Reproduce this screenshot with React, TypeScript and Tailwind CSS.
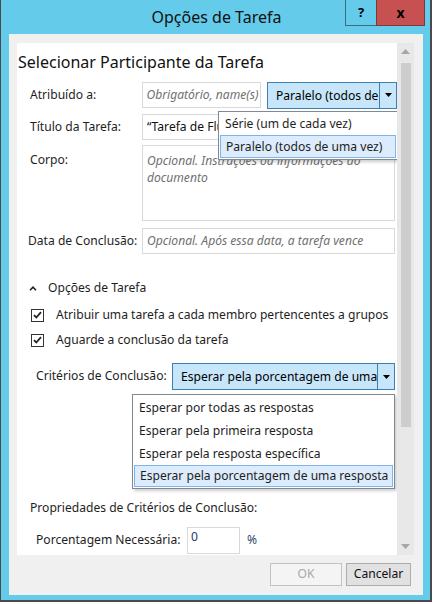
import React from 'react';

const font = { fontFamily: '"Noto Sans", "Open Sans", sans-serif' };

const Caret = () => (
    <svg width="7" height="4" viewBox="0 0 7 4"><path d="M0 0h7L3.5 4z" fill="#000" /></svg>
);

const Combo = ({ text, width }: { text: string; width: string }) => (
    <div className={`flex h-[27px] ${width} border border-[#3c7fb1] bg-[#c7e6fa]`}>
        <div className="flex-1 overflow-hidden whitespace-nowrap pl-[8px] leading-[25px] text-[#000]">{text}</div>
        <div className="flex w-[17px] items-center justify-center border-l border-[#3c7fb1]">
            <Caret />
        </div>
    </div>
);

const Check = () => (
    <div className="flex h-[13px] w-[13px] items-center justify-center border border-[#333] bg-white">
        <svg width="9" height="8" viewBox="0 0 9 8">
            <path d="M1 4.2l2.3 2.3L8 1.2" fill="none" stroke="#222" strokeWidth="1.8" />
        </svg>
    </div>
);

export default function App() {
    return (
        <div className="h-[604px] w-[435px] bg-white text-[12.1px] text-[#1e1e1e]" style={font}>
            <div className="relative flex h-[602px] w-[432px] flex-col border-b-2 border-l border-r-2 border-[#4a4a4a] bg-[#64cbea]">
                {/* Title bar */}
                <div className="flex h-[34px] items-center justify-center pl-[2px] text-[16px] text-[#111]">
                    Opções de Tarefa
                </div>
                <div className="absolute right-[5px] top-0 flex h-[26px]">
                    <div className="flex w-[31px] items-center justify-center border-b border-l border-[#3a6d80] text-[13px] font-bold text-black">?</div>
                    <div className="flex w-[49px] items-center justify-center border-b border-l border-r border-[#7a3a3a] bg-[#c75050] text-[14px] font-bold text-black">x</div>
                </div>

                {/* Client area */}
                <div className="ml-[8px] mr-[7px] flex h-[561px] flex-col bg-[#f0f0f0] pt-[9px]">
                    <div className="ml-[8px] mr-[9px] flex h-[512px]">
                        {/* White panel */}
                        <div className="relative flex w-[380px] flex-col overflow-hidden bg-white">
                            <div className="ml-[1px] mt-[8px] h-[22px] text-[16px] leading-[22px] text-[#111]">Selecionar Participante da Tarefa</div>

                            <div className="mt-[8px] flex h-[28px] items-center">
                                <div className="ml-[13px] w-[112px]">Atribuído a:</div>
                                <div className="h-[26px] w-[120px] overflow-hidden whitespace-nowrap border border-[#d9d9d9] pl-[4px] leading-[24px] italic text-[#707070]">Obrigatório, name(s)</div>
                                <div className="ml-[6px]"><Combo text="Paralelo (todos de uma vez)" width="w-[130px]" /></div>
                            </div>

                            <div className="mt-[5px] flex h-[26px] items-center">
                                <div className="ml-[13px] w-[112px]">Título da Tarefa:</div>
                                <div className="h-[26px] w-[253px] overflow-hidden whitespace-nowrap border border-[#d9d9d9] pl-[4px] leading-[24px] text-[#111]">“Tarefa de Fluxo de Trabalho”</div>
                            </div>

                            <div className="mt-[5px] flex h-[76px]">
                                <div className="ml-[13px] w-[112px] pt-[6px]">Corpo:</div>
                                <div className="h-[76px] w-[253px] border border-[#d9d9d9] px-[4px] pt-[6px] leading-[17px] italic text-[#707070]">Opcional. Instruções ou informações do documento</div>
                            </div>

                            <div className="mt-[7px] flex h-[26px] items-center">
                                <div className="ml-[11px] w-[114px] whitespace-nowrap">Data de Conclusão:</div>
                                <div className="h-[26px] w-[253px] overflow-hidden whitespace-nowrap border border-[#d9d9d9] pl-[4px] leading-[24px] italic text-[#707070]">Opcional. Após essa data, a tarefa vence</div>
                            </div>

                            <div className="mt-[24px] flex h-[20px] items-center">
                                <svg className="ml-[12px]" width="8" height="5" viewBox="0 0 8 5">
                                    <path d="M1 4.2L4 1.2l3 3" fill="none" stroke="#222" strokeWidth="1.6" />
                                </svg>
                                <div className="ml-[11px]">Opções de Tarefa</div>
                            </div>

                            <div className="mt-[7px] flex h-[20px] items-center">
                                <div className="ml-[14px]"><Check /></div>
                                <div className="ml-[12px] whitespace-nowrap">Atribuir uma tarefa a cada membro pertencentes a grupos</div>
                            </div>
                            <div className="mt-[5px] flex h-[20px] items-center">
                                <div className="ml-[14px]"><Check /></div>
                                <div className="ml-[12px]">Aguarde a conclusão da tarefa</div>
                            </div>

                            <div className="mt-[13px] flex h-[27px] items-center">
                                <div className="ml-[19px] w-[136px]">Critérios de Conclusão:</div>
                                <Combo text="Esperar pela porcentagem de uma resposta" width="w-[223px]" />
                            </div>

                            <div className="mt-[108px] flex h-[20px] items-center">
                                <div className="ml-[13px]">Propriedades de Critérios de Conclusão:</div>
                            </div>

                            <div className="mt-[9px] flex h-[27px] items-center">
                                <div className="ml-[19px] w-[151px]">Porcentagem Necessária:</div>
                                <div className="h-[27px] w-[53px] border border-[#d9d9d9] pl-[3px] pt-[1px] leading-[16px] text-[#1a3a6a]">0</div>
                                <div className="ml-[7px] text-[#2a4a6e]">%</div>
                            </div>

                            {/* Open list: Atribuído */}
                            <div className="absolute left-[201px] top-[68px] flex w-[180px] flex-col border border-[#828790] bg-white py-[1px] shadow-[2px_2px_3px_rgba(0,0,0,0.2)]">
                                <div className="h-[22px] pl-[6px] leading-[22px]">Série (um de cada vez)</div>
                                <div className="mx-[1px] h-[23px] border border-[#7eb4ea] bg-[#dcecfc] pl-[5px] leading-[21px]">Paralelo (todos de uma vez)</div>
                            </div>

                            {/* Open list: Critérios */}
                            <div className="absolute left-[115px] top-[351px] flex w-[263px] flex-col border border-[#828790] bg-white py-[1px] shadow-[2px_2px_3px_rgba(0,0,0,0.2)]">
                                <div className="h-[23px] pl-[6px] leading-[23px]">Esperar por todas as respostas</div>
                                <div className="h-[23px] pl-[6px] leading-[23px]">Esperar pela primeira resposta</div>
                                <div className="h-[23px] pl-[6px] leading-[23px]">Esperar pela resposta específica</div>
                                <div className="mx-[1px] h-[22px] border border-[#7eb4ea] bg-[#dcecfc] pl-[5px] leading-[20px]">Esperar pela porcentagem de uma resposta</div>
                            </div>
                        </div>

                        {/* Scrollbar */}
                        <div className="flex w-[17px] flex-col items-center bg-[#e8e8e8]">
                            <div className="flex h-[17px] items-center justify-center">
                                <svg width="9" height="5" viewBox="0 0 9 5"><path d="M0 5L4.5 0 9 5z" fill="#a6a6a6" /></svg>
                            </div>
                            <div className="mt-[3px] h-[364px] w-[10px] bg-[#cdcdcd]" />
                            <div className="flex-1" />
                            <div className="flex h-[17px] items-center justify-center">
                                <svg width="9" height="5" viewBox="0 0 9 5"><path d="M0 0h9L4.5 5z" fill="#a6a6a6" /></svg>
                            </div>
                        </div>
                    </div>

                    {/* Buttons */}
                    <div className="mr-[12px] mt-[8px] flex justify-end gap-[4px]">
                        <div className="flex h-[23px] w-[72px] items-center justify-center border border-[#c2c2c2] bg-[#f4f4f4] text-[#a8a8a8]">OK</div>
                        <div className="flex h-[23px] w-[65px] items-center justify-center border border-[#adadad] bg-[#e1e1e1] text-[#111]">Cancelar</div>
                    </div>
                </div>
            </div>
        </div>
    );
}
